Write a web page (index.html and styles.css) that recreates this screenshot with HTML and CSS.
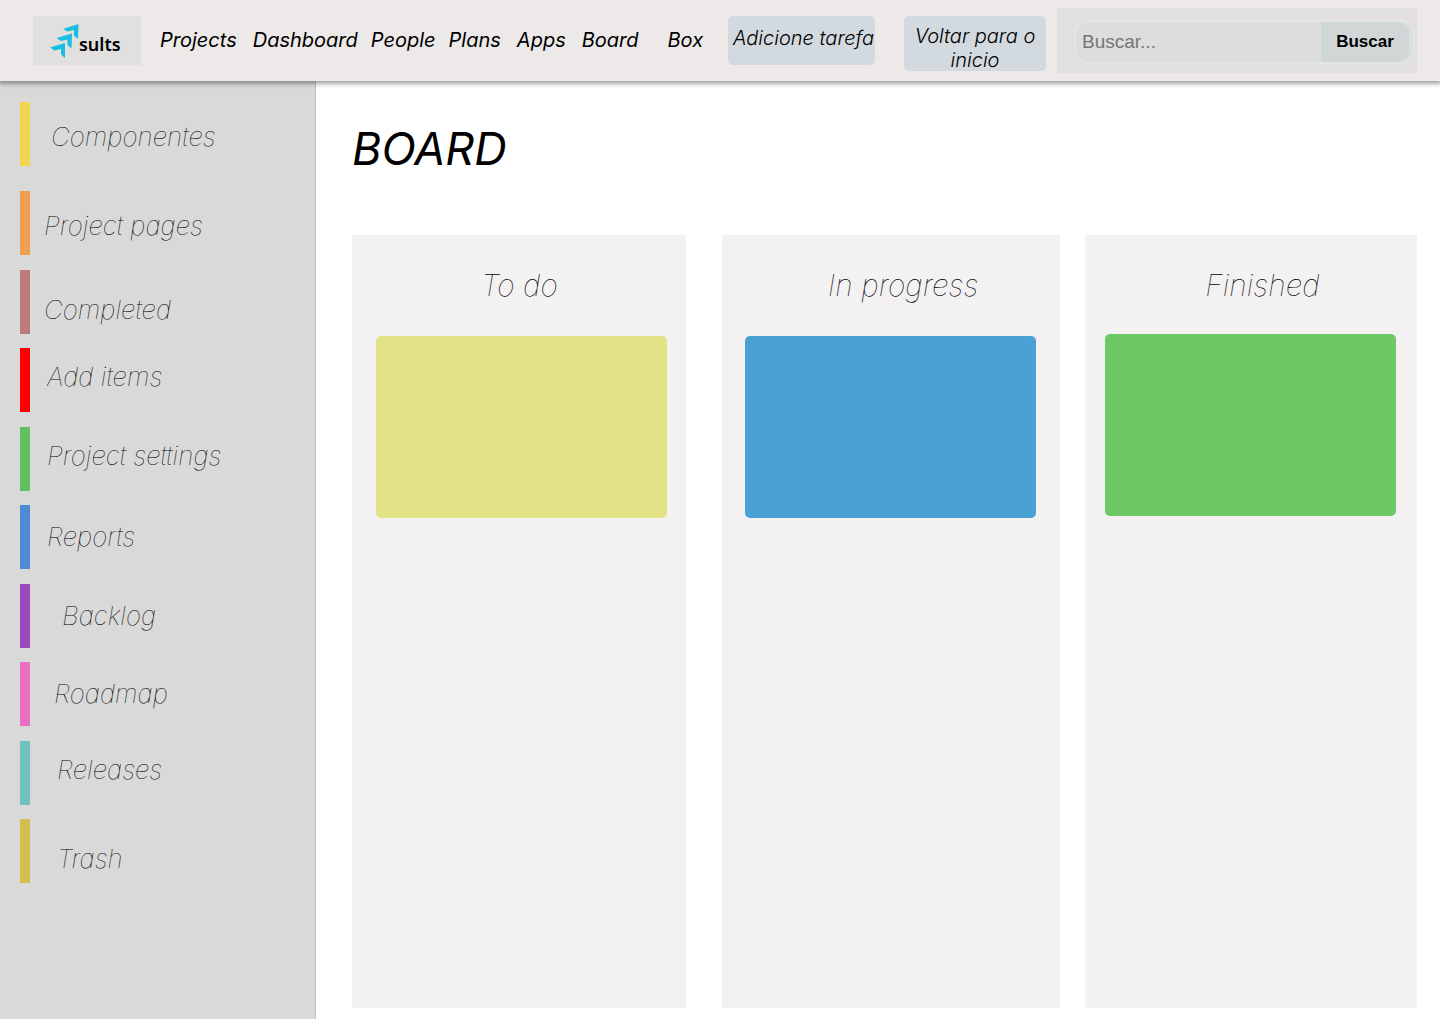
FILE: index.html
```html
<!DOCTYPE html>
<html lang="pt-BR">
<head>
<meta charset="utf-8">
<meta name="viewport" content="width=device-width, initial-scale=1">
<title>Sults - Board</title>
<link rel="stylesheet" href="styles.css">
</head>
<body>
<header class="topbar">
  <a class="logo" href="#">
    <svg class="logo-mark" width="29" height="34" viewBox="0 0 29 34" aria-hidden="true">
      <g fill="#17c0e0">
        <path d="M13 5 28.500 0 28 15 24 11.500V6L17.500 7.500Z"/>
        <path d="M6.500 14 22 9.500 21.500 24.500 17.500 21V15.500L11 17Z"/>
        <path d="M0 23.500 15 19 15 34 11 30.500V25L4.500 26.500Z"/>
      </g>
    </svg>
    <span class="logo-name">sults</span>
  </a>
  <nav class="nav">
    <a class="nav-link" href="#">Projects</a>
    <a class="nav-link nav-apart" href="#">Dashboard</a>
    <a class="nav-link" href="#">People</a>
    <a class="nav-link" href="#">Plans</a>
    <a class="nav-link nav-apart" href="#">Apps</a>
    <a class="nav-link nav-apart" href="#">Board</a>
    <a class="nav-link nav-far" href="#">Box</a>
  </nav>
  <div class="actions">
    <button class="action action-add" type="button">Adicione tarefa</button>
    <button class="action action-back" type="button">Voltar para o inicio</button>
  </div>
  <form class="search">
    <div class="search-box">
      <input class="search-input" type="search" placeholder="Buscar..." aria-label="Buscar">
      <button class="search-button" type="button">Buscar</button>
    </div>
  </form>
</header>
<div class="layout">
  <aside class="sidebar">
    <ul class="menu">
      <li class="item yellow indent-2 mid spaced"><a class="item-link" href="#">Componentes</a></li>
      <li class="item orange mid"><a class="item-link" href="#">Project pages</a></li>
      <li class="item rose low"><a class="item-link" href="#">Completed</a></li>
      <li class="item red indent-1 high"><a class="item-link" href="#">Add items</a></li>
      <li class="item green indent-1 high"><a class="item-link" href="#">Project settings</a></li>
      <li class="item blue indent-1"><a class="item-link" href="#">Reports</a></li>
      <li class="item purple indent-5"><a class="item-link" href="#">Backlog</a></li>
      <li class="item pink indent-3"><a class="item-link" href="#">Roadmap</a></li>
      <li class="item teal indent-4 high"><a class="item-link" href="#">Releases</a></li>
      <li class="item mustard indent-4 low"><a class="item-link" href="#">Trash</a></li>
    </ul>
  </aside>
  <main class="content">
    <h1 class="title">BOARD</h1>
    <div class="board">
      <section class="column column-todo">
        <h2 class="column-title">To do</h2>
        <div class="card card-todo"></div>
      </section>
      <section class="column column-progress">
        <h2 class="column-title">In progress</h2>
        <div class="card card-progress"></div>
      </section>
      <section class="column column-finished">
        <h2 class="column-title">Finished</h2>
        <div class="card card-finished"></div>
      </section>
    </div>
  </main>
</div>
</body>
</html>
```
FILE: styles.css
```css
* { box-sizing: border-box; }

body {
  margin: 0;
  min-height: 100vh;
  display: flex;
  flex-direction: column;
  background: #fff;
  color: #000;
  font-family: Inter, "Liberation Sans", sans-serif;
  font-variant-ligatures: none;
}

a { color: inherit; text-decoration: none; }

/* Top bar */
.topbar {
  position: relative;
  display: flex;
  align-items: flex-start;
  min-height: 81px;
  padding: 8px 23px 8px 33px;
  background: #ece9e8;
  box-shadow: 0 2px 4px 1px rgba(0, 0, 0, 0.35);
}

.logo {
  display: flex;
  align-items: flex-start;
  flex: none;
  width: 108px;
  height: 49px;
  margin-top: 8px;
  padding: 8px 0 0 17px;
  background: #e1e0de;
}

.logo-mark { flex: none; }

.logo-name {
  margin-top: 8px;
  font: 600 18px/24px "Noto Sans", sans-serif;
}

.nav {
  display: flex;
  gap: 13px;
  margin: 20px 0 0 19px;
}

.nav-link {
  font-size: 20px;
  line-height: 24px;
  font-style: italic;
}

.nav-apart { margin-left: 3px; }
.nav-far { margin-left: 16px; }

.actions {
  display: flex;
  align-items: flex-start;
  gap: 29px;
  margin: 8px 11px 0 auto;
}

.action {
  border: 0;
  border-radius: 5px;
  background: #d2dae0;
  color: #000;
  font: italic 300 20px/24px Inter, sans-serif;
}

.action-add {
  width: 147px;
  height: 49px;
  padding: 0 0 6px 4px;
  white-space: nowrap;
}

.action-back {
  width: 142px;
  height: 55px;
  padding: 8px 8px 0;
}

.search {
  width: 360px;
  height: 65px;
  padding: 12px 2px 9px 17px;
  background: #e1e0de;
}

.search-box {
  display: flex;
  height: 44px;
  padding-right: 4px;
  border: 2px solid #e0e5e5;
  border-radius: 14px;
  background: #dddddd;
}

.search-input {
  flex: 1;
  min-width: 0;
  padding: 0 6px;
  border: 0;
  background: none;
  font: 19px/24px "Liberation Sans", Arial, sans-serif;
}

.search-input::placeholder { color: #757575; }

.search-button {
  width: 88px;
  padding: 0;
  border: 0;
  border-radius: 0 12px 12px 0;
  background: #d1d7d7;
  color: #000;
  font: bold 17px/24px "Liberation Sans", Arial, sans-serif;
}

/* Page body */
.layout {
  display: flex;
  flex: 1;
  margin-bottom: 5px;
}

.sidebar {
  flex: none;
  width: 316px;
  padding: 21px 20px;
  background: #d9d9d9;
  border-right: 1px solid #bdbdbd;
}

.menu {
  display: grid;
  gap: 14px;
  margin: 0;
  padding: 0;
  list-style: none;
}

.item {
  display: flex;
  align-items: center;
  height: 64px;
  padding-left: 14px;
  border-left: 10px solid;
}

.item:nth-child(odd) { margin-top: 1px; }
.item:first-child { margin-top: 0; }

.item-link {
  color: #000;
  font-size: 26px;
  line-height: 32px;
  font-style: italic;
  font-weight: 100;
}

.spaced { margin-bottom: 11px; }
.indent-1 { padding-left: 17px; }
.indent-2 { padding-left: 21px; }
.indent-3 { padding-left: 24px; }
.indent-4 { padding-left: 27px; }
.indent-5 { padding-left: 32px; }
.high { padding-bottom: 6px; }
.mid { padding-top: 6px; }
.low { padding-top: 16px; }

.yellow { border-color: #f0d74f; }
.orange { border-color: #f09e50; }
.rose { border-color: #bb7979; }
.red { border-color: #ff0000; }
.green { border-color: #64c05f; }
.blue { border-color: #4f8bd4; }
.purple { border-color: #984abd; }
.pink { border-color: #e970c0; }
.teal { border-color: #6fc2bd; }
.mustard { border-color: #d2bf50; }

.content {
  display: flex;
  flex: 1;
  flex-direction: column;
  min-width: 0;
  padding: 40px 23px 11px 36px;
}

.title {
  margin: 0 0 58px;
  font-size: 45px;
  line-height: 56px;
  font-style: italic;
  font-weight: 400;
}

.board {
  display: grid;
  grid-template-columns: 334fr 36px 338fr 25px 332fr;
  flex: 1;
}

.column {
  padding: 32px 19px 20px 24px;
  background: #f3f1f2;
}

.column-todo { grid-column: 1; }
.column-progress { grid-column: 3; padding-left: 23px; }
.column-finished { grid-column: 5; padding-left: 20px; }

.column-title {
  margin: 0 0 33px;
  padding-right: 4px;
  font-size: 30px;
  line-height: 36px;
  font-style: italic;
  font-weight: 100;
  text-align: center;
}

.column-progress .column-title { padding-left: 24px; }

.column-finished .column-title {
  margin-bottom: 31px;
  padding-left: 26px;
}

.card {
  max-width: 291px;
  height: 182px;
  border-radius: 5px;
}

.card-todo { background: #e2e386; }
.card-progress { background: #4aa1d5; }
.card-finished { background: #6ec965; }
```
